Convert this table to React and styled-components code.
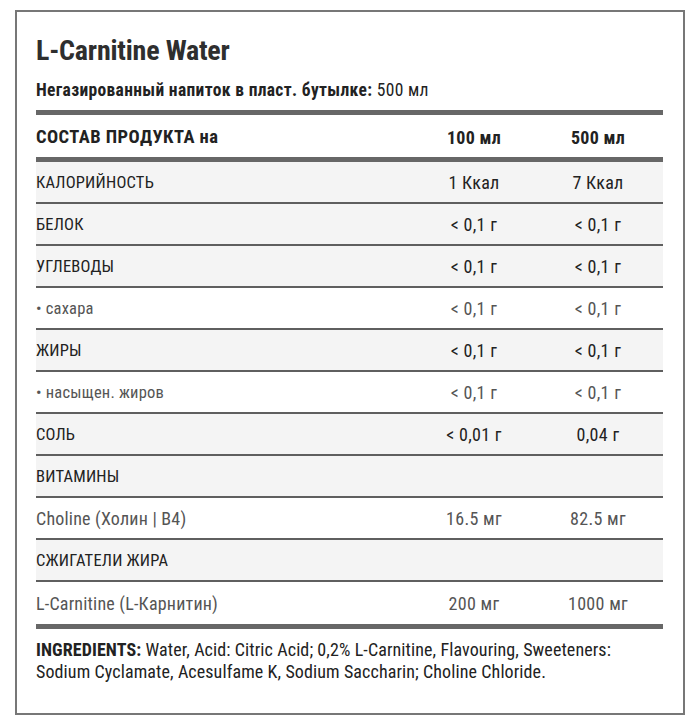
import React from 'react';
import styled, { createGlobalStyle } from 'styled-components';

const GlobalStyle = createGlobalStyle`
  html, body {
    margin: 0;
    padding: 0;
    background: #fff;
  }
  body {
    font-family: Roboto, "Liberation Sans", sans-serif;
    font-stretch: condensed;
    color: #222;
  }
`;

// sub: small = "• ..." subitems, large = vitamin / fat burner entries
const rows = [
  { label: 'КАЛОРИЙНОСТЬ', a: '1 Ккал', b: '7 Ккал' },
  { label: 'БЕЛОК', a: '< 0,1 г', b: '< 0,1 г' },
  { label: 'УГЛЕВОДЫ', a: '< 0,1 г', b: '< 0,1 г' },
  { label: '• сахара', a: '< 0,1 г', b: '< 0,1 г', sub: 'small' },
  { label: 'ЖИРЫ', a: '< 0,1 г', b: '< 0,1 г' },
  { label: '• насыщен. жиров', a: '< 0,1 г', b: '< 0,1 г', sub: 'small' },
  { label: 'СОЛЬ', a: '< 0,01 г', b: '0,04 г' },
  { label: 'ВИТАМИНЫ', a: '', b: '' },
  { label: 'Choline (Холин | B4)', a: '16.5 мг', b: '82.5 мг', sub: 'large' },
  { label: 'СЖИГАТЕЛИ ЖИРА', a: '', b: '' },
  { label: 'L-Carnitine (L-Карнитин)', a: '200 мг', b: '1000 мг', sub: 'large' },
];

const labelSize = { small: 16.5, large: 18 };

const App = () => {
  return (
    <>
      <GlobalStyle />
      <Card>
        <Title>L-Carnitine Water</Title>
        <Subtitle>
          <b>Негазированный напиток в пласт. бутылке:</b> 500 мл
        </Subtitle>
        <Bar />
        <HeadRow>
          <span>СОСТАВ ПРОДУКТА на</span>
          <Cell>100 мл</Cell>
          <Cell>500 мл</Cell>
        </HeadRow>
        <Bar />
        <Table>
          {rows.map((r) => (
            <Row key={r.label} $sub={!!r.sub}>
              <Label $size={r.sub ? labelSize[r.sub] : 16.5}>{r.label}</Label>
              <Cell>{r.a}</Cell>
              <Cell>{r.b}</Cell>
            </Row>
          ))}
        </Table>
        <Bar />
        <Ingredients>
          <b>INGREDIENTS:</b> Water, Acid: Citric Acid; 0,2% L-Carnitine, Flavouring, Sweeteners:
          <br />
          Sodium Cyclamate, Acesulfame K, Sodium Saccharin; Choline Chloride.
        </Ingredients>
      </Card>
    </>
  );
};

const Card = styled.div`
  box-sizing: border-box;
  width: 670px;
  margin: 10px 0 0 15px;
  border: 2px solid #777;
  padding: 22px 20px 30px 19px;
  display: flex;
  flex-direction: column;
`;

const Title = styled.h1`
  margin: 0;
  font-size: 28px;
  line-height: 34px;
  font-weight: 700;
  letter-spacing: -0.2px;
  color: #2e2e2e;
`;

const Subtitle = styled.div`
  margin: 11px 0 9px;
  font-size: 17.5px;
  line-height: 22px;
  letter-spacing: 0.33px;
  color: #222;

  b {
    font-weight: 700;
  }
`;

const Bar = styled.div`
  height: 5px;
  background: #676767;
`;

const HeadRow = styled.div`
  display: grid;
  grid-template-columns: 1fr 124px 124px;
  padding: 2px 3px 0 0;
  box-sizing: border-box;
  height: 42px;
  align-items: center;
  font-size: 18.5px;
  font-weight: 700;
  letter-spacing: 0.45px;
  color: #222;
`;

const Table = styled.div`
  display: flex;
  flex-direction: column;
`;

const Row = styled.div`
  display: grid;
  grid-template-columns: 1fr 124px 124px;
  padding-right: 3px;
  height: 40px;
  align-items: center;
  background: ${(p) => (p.$sub ? '#fff' : '#f4f4f4')};
  border-bottom: 2px solid #5f5f5f;
  color: ${(p) => (p.$sub ? '#555' : '#222')};

  &:last-child {
    border-bottom: 0;
    height: 42px;
  }
`;

const Label = styled.span`
  font-size: ${(p) => p.$size}px;
  letter-spacing: 0.2px;
`;

const Cell = styled.span`
  text-align: center;
  font-size: 18px;
  letter-spacing: 0.3px;
`;

const Ingredients = styled.p`
  margin: 10px 0 0;
  font-size: 18px;
  line-height: 22px;
  letter-spacing: 0.1px;
  color: #222;

  b {
    font-weight: 700;
  }
`;

export default App;
